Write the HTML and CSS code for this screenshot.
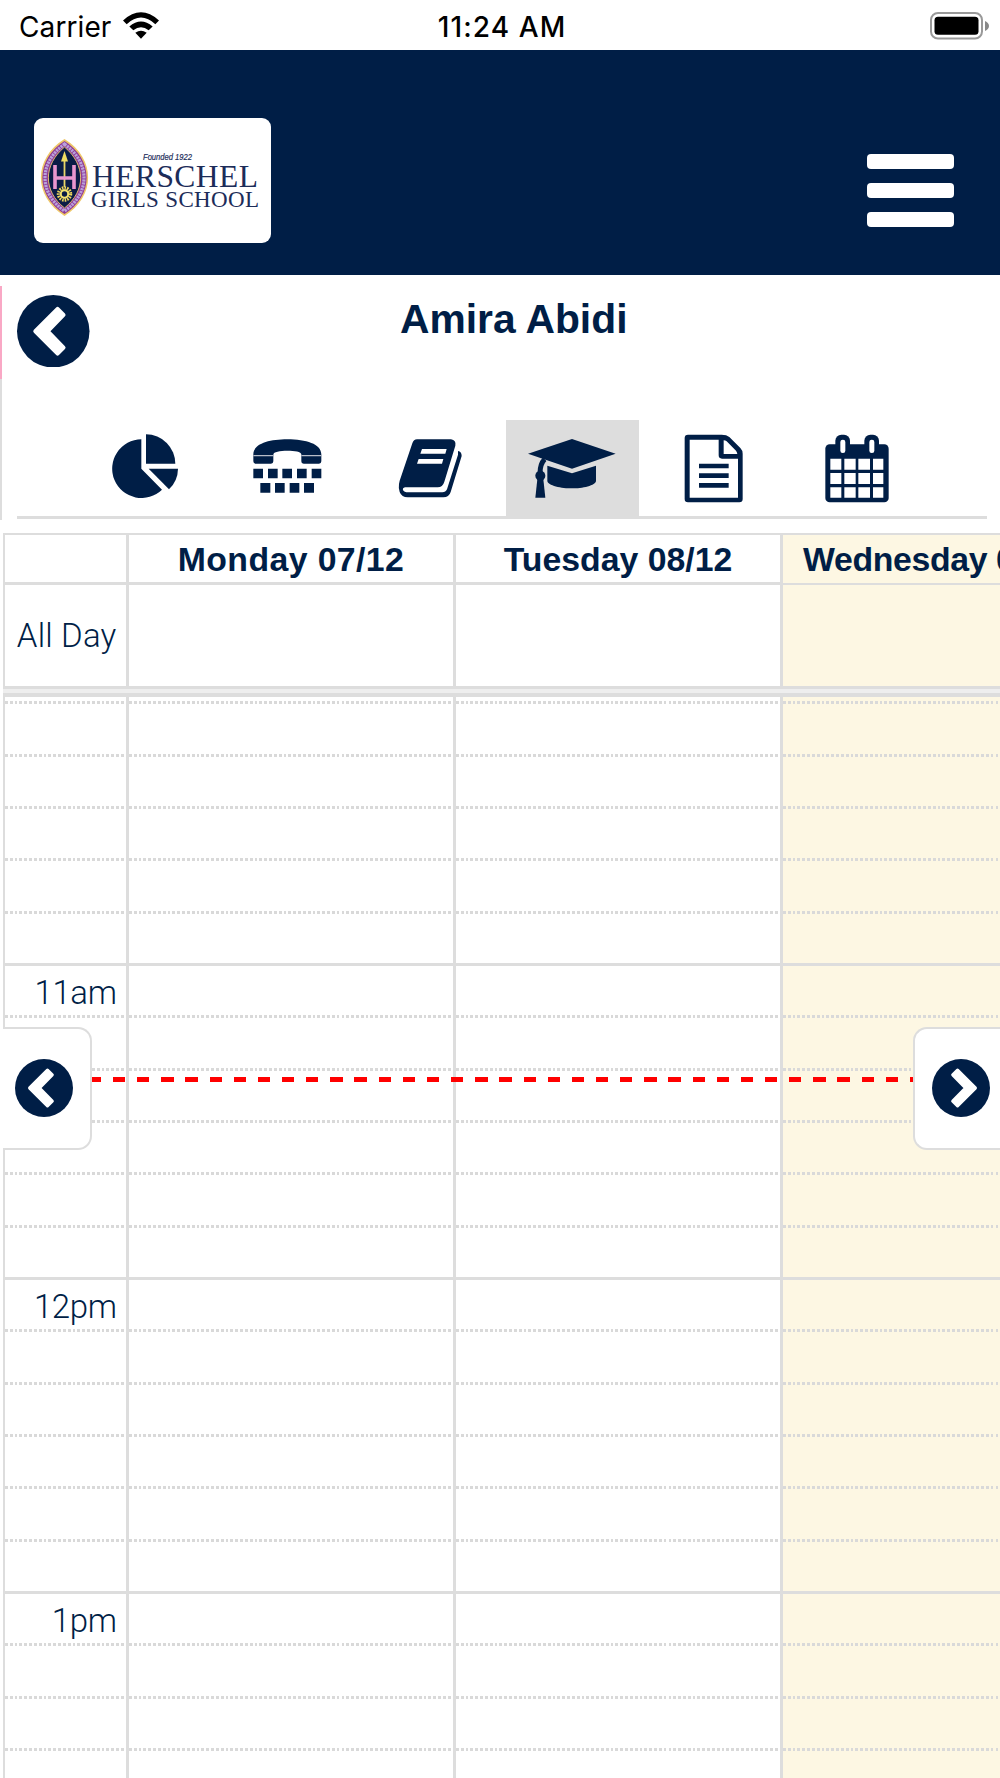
FILE: index.html
```html
<!DOCTYPE html>
<html lang="en">
<head>
    <meta charset="UTF-8">
    <meta name="viewport" content="width=device-width, initial-scale=1.0">
    <title>Herschel Girls School - Timetable</title>
    <link rel="stylesheet" href="styles.css">
</head>
<body>

<div class="status-bar">
    <div class="carrier">
        <span class="carrier-name">Carrier</span>
        <svg class="wifi" viewBox="0 0 108 80">
            <path d="M0 25 Q54 -24 108 25 L97 36 Q54 -4 11 36 Z"/>
            <path d="M19 43 Q54 13 89 43 L77 54 Q54 36 31 54 Z"/>
            <path d="M37 62 Q54 50 71 62 L54 80 Z"/>
        </svg>
    </div>
    <span class="clock">11:24 AM</span>
    <svg class="battery" viewBox="0 0 59 28">
        <rect x="1" y="1" width="51" height="25.5" rx="7" fill="#fff" stroke="#999" stroke-width="2"/>
        <rect x="4.5" y="4.7" width="44" height="18" rx="3.5"/>
        <path d="M55 9 Q59 11 59 14 T55 19 Z" fill="#888"/>
    </svg>
</div>

<header class="header">
    <div class="logo">
        <svg viewBox="0 0 237 126">
            <!-- crest -->
            <path d="M30.5 22 C61 41 61 78 30.5 97 C0 78 0 41 30.5 22 Z" fill="#8f3a94" stroke="#eec767" stroke-width="1.5"/>
            <path d="M30.5 26 C56.5 45 56.5 75 30.5 93 C4.5 75 4.5 45 30.5 26 Z" fill="none" stroke="#b9a0dc" stroke-width="3.2" stroke-dasharray="2.2 .8"/>
            <path d="M30.5 29 C52 47 52 73 30.5 90 C9 73 9 47 30.5 29 Z" fill="#0b1c46" stroke="#e0ba70" stroke-width="1"/>
            <path d="M30.5 41 V69" stroke="#e8d568" stroke-width="1.8"/>
            <path d="M30.5 33 L34 43.5 H27 Z" fill="#f1dd62"/>
            <path d="M21 47 V71 M40 47 V71 M21 60 H40" stroke="#e996cf" stroke-width="3.6" fill="none"/>
            <circle cx="30.5" cy="76" r="6" fill="none" stroke="#eed65c" stroke-width="3.5" stroke-dasharray="1.5 1"/>
            <circle cx="30.5" cy="76" r="3.7" fill="#0b1c46" stroke="#f5e36e" stroke-width="2"/>
            <!-- school name -->
            <text class="logo-founded" x="109" y="41.8" textLength="49" lengthAdjust="spacingAndGlyphs">Founded 1922</text>
            <text class="logo-name" x="58" y="68.6" textLength="166" lengthAdjust="spacing">HERSCHEL</text>
            <text class="logo-sub" x="57" y="89" textLength="168" lengthAdjust="spacing">GIRLS SCHOOL</text>
        </svg>
    </div>
    <div class="menu">
        <span></span>
        <span></span>
        <span></span>
    </div>
</header>

<div class="student">
    <div class="side-mark"></div>
    <div class="student-top">
        <svg class="back" viewBox="0 0 218 218">
            <circle cx="109" cy="109" r="109"/>
            <path class="chevron" d="M122 42 L140 60 L92 109 L140 158 L122 176 L55 109 Z"/>
        </svg>
        <h1>Amira Abidi</h1>
    </div>

    <nav class="tabs">
        <a class="tab">
            <svg viewBox="0 0 270 210">
                <path d="M124 16 V104 L186 167 A88 88 0 1 1 124 16 Z"/>
                <path d="M138 1 A88 88 0 0 1 226 89 H138 Z"/>
                <path d="M146 104 H234 A88 88 0 0 1 207 166 Z"/>
            </svg>
        </a>
        <a class="tab">
            <svg viewBox="0 0 270 210">
                <path d="M34 61 C34 30 80 16 136 16 S238 30 238 61 V82 q0 7 -7 7 H186 q-8 0 -8 -8 V61 C178 53 158 50 136 50 S94 53 94 62 V82 q0 7 -7 7 H41 q-7 0 -7 -7 Z"/>
                <path d="M34 65 H94 M178 65 H238" stroke="#b8bdc8" stroke-width="4"/>
                <path d="M34 104 h29 v29 h-29z M78 104 h29 v29 h-29z M121 104 h29 v29 h-29z M165 104 h29 v29 h-29z M209 104 h29 v29 h-29z"/>
                <path d="M55 147 h30 v29 h-30z M99 147 h29 v29 h-29z M143 147 h29 v29 h-29z M186 147 h30 v29 h-30z"/>
            </svg>
        </a>
        <a class="tab">
            <svg viewBox="0 0 270 210">
                <path d="M96 16 H198 Q214 18 211 35 L178 143 Q173 160 158 160 H60 Q52 162 54 168 Q57 175 70 175 H172 Q182 175 186 166 L219 62 V51 Q230 53 230 66 L197 174 Q192 190 175 190 H68 Q50 190 44 174 Q40 162 42 150 L44 140 L82 28 Q86 16 96 16 Z"/>
                <path d="M111 45 H185 L181 59 H106 Z M101 75 H175 L171 89 H96 Z" fill="#fff"/>
            </svg>
        </a>
        <a class="tab active">
            <svg viewBox="0 0 270 210">
                <path d="M135 15 L266 59 L135 104 L3 59 Z"/>
                <path d="M61 95 L135 118 L207 95 V140 C207 155 165 163 135 163 S61 155 61 140 Z"/>
                <path d="M39 118 C39 96 43 86 53 76" fill="none" stroke="#001e46" stroke-width="15"/>
                <circle cx="40" cy="125" r="15"/>
                <path d="M31 136 H49 L55 191 H25 Z"/>
            </svg>
        </a>
        <a class="tab">
            <svg viewBox="0 0 270 210">
                <path fill-rule="evenodd" d="M54 2 H155 Q170 2 178 9 L211 42 Q218 49 218 59 V195 q0 10 -10 10 H54 q-10 0 -10 -10 V12 q0 -10 10 -10 Z M59 17 V191 H204 V74 H156 Q146 74 146 64 V17 Z M161 19 V60 H202 Q201 54 198 50 L170 22 Q166 19 161 19 Z"/>
                <path d="M87 89 h89 v14 h-89z M87 118 h89 v14 h-89z M87 147 h89 v14 h-89z"/>
            </svg>
        </a>
        <a class="tab">
            <svg viewBox="0 0 270 210">
                <rect x="37" y="31" width="190" height="174" rx="13"/>
                <rect x="67" y="2" width="44" height="66" rx="18"/>
                <rect x="154" y="2" width="44" height="66" rx="18"/>
                <g fill="#fff">
                    <rect x="82" y="17" width="15" height="40" rx="7"/>
                    <rect x="169" y="17" width="15" height="40" rx="7"/>
                    <path d="M52 74 h33 v33 h-33z M94 74 h34 v33 h-34z M136 74 h35 v33 h-35z M180 74 h31 v33 h-31z"/>
                    <path d="M52 117 h33 v33 h-33z M94 117 h34 v33 h-34z M136 117 h35 v33 h-35z M180 117 h31 v33 h-31z"/>
                    <path d="M52 160 h33 v31 h-33z M94 160 h34 v31 h-34z M136 160 h35 v31 h-35z M180 160 h31 v31 h-31z"/>
                </g>
            </svg>
        </a>
    </nav>
</div>

<div class="calendar">
    <div class="row head">
        <div class="axis"></div>
        <div class="day monday">Monday 07/12</div>
        <div class="day">Tuesday 08/12</div>
        <div class="day today">Wednesday 09/12</div>
    </div>
    <div class="row all-day">
        <div class="axis"><span>All Day</span></div>
        <div class="day"></div>
        <div class="day"></div>
        <div class="day today"></div>
    </div>
    <div class="divider"></div>

    <div class="slots" id="slots">
        <div class="row lead">
            <div class="axis"></div>
            <div class="day"></div>
            <div class="day"></div>
            <div class="day today"></div>
        </div>
    </div>

    <div class="now-line"></div>
    <div class="nav-btn prev">
        <svg viewBox="0 0 218 218">
            <circle cx="109" cy="109" r="109"/>
            <path class="chevron" d="M122 42 L140 60 L92 109 L140 158 L122 176 L55 109 Z"/>
        </svg>
    </div>
    <div class="nav-btn next">
        <svg viewBox="0 0 218 218">
            <circle cx="109" cy="109" r="109"/>
            <path class="chevron" d="M96 42 L78 60 L126 109 L78 158 L96 176 L163 109 Z"/>
        </svg>
    </div>
</div>

<script>
    // 10 minute slots, the hour label goes on the first one of each hour
    const hours = { 5: '11am', 11: '12pm', 17: '1pm' };
    const slots = document.getElementById('slots');

    for (let i = 0; i < 21; i++) {
        const row = document.createElement('div');
        row.className = hours[i] ? 'row slot hour' : 'row slot';
        row.innerHTML = `<div class="axis"><span>${hours[i] || ''}</span></div>
            <div class="day"></div><div class="day"></div><div class="day today"></div>`;
        slots.appendChild(row);
    }
</script>

</body>
</html>
```

FILE: styles.css
```css
* {
    box-sizing: border-box;
}

body {
    margin: 0;
    height: 1778px;
    display: flex;
    flex-direction: column;
    overflow: hidden;
    background-color: #fff;
    color: #001e46;
    font-family: "Liberation Sans", Arial, sans-serif;
}

svg {
    display: block;
    fill: #001e46;
}

/* Status bar */
.status-bar {
    height: 50px;
    flex: none;
    display: grid;
    grid-template-columns: 1fr auto 1fr;
    align-items: start;
    padding: 0 11px 0 19px;
    color: #000;
    font-family: Inter, sans-serif;
    font-size: 28px;
    line-height: 54px;
}

.status-bar svg {
    fill: #000;
}

.carrier {
    display: flex;
}

.carrier-name {
    letter-spacing: 0.1px;
}

.wifi {
    width: 36px;
    height: 27px;
    margin: 12px 0 0 11.5px;
}

.clock {
    margin-right: 4px;
    font-weight: 500;
    letter-spacing: 1.1px;
}

.battery {
    width: 59px;
    height: 28px;
    margin-top: 12px;
    justify-self: end;
}

/* Header */
.header {
    height: 224.6px;
    flex: none;
    display: flex;
    justify-content: space-between;
    align-items: flex-start;
    padding: 67.5px 46px 0 34px;
    background-color: #001e46;
}

.logo {
    width: 237px;
    height: 125.5px;
    background-color: #fff;
    border-radius: 9px;
}

.logo text {
    fill: #1c2c59;
}

.logo-founded {
    font-size: 9.5px;
    font-style: italic;
    stroke: #1c2c59;
    stroke-width: 0.2;
}

.logo-name {
    font-family: "Liberation Serif", serif;
    font-size: 31.5px;
}

.logo-sub {
    font-family: "Liberation Serif", serif;
    font-size: 23px;
}

.menu {
    width: 87px;
    margin-top: 36.3px;
    display: flex;
    flex-direction: column;
    gap: 14px;
}

.menu span {
    height: 15px;
    background-color: #fff;
    border-radius: 4px;
}

/* Student */
.student {
    position: relative;
    height: 258.4px;
    flex: none;
    padding: 20.4px 13px 0 17px;
}

.side-mark {
    position: absolute;
    left: 0;
    top: 11px;
    width: 2px;
    height: 234px;
    background: linear-gradient(#f9a8c5 93px, #ddd 93px);
}

.student-top {
    height: 125px;
    display: flex;
}

.back {
    width: 72.5px;
    height: 72.5px;
}

.chevron {
    fill: #fff;
    stroke: #fff;
    stroke-width: 12;
    stroke-linejoin: round;
}

.student h1 {
    flex: 1;
    margin: 0 49px 0 0;
    text-align: center;
    font-size: 40.8px;
    line-height: 49px;
}

.tabs {
    height: 99px;
    display: flex;
    padding-left: 56.3px;
    border-bottom: 3px solid #ddd;
}

.tab {
    width: 132.6px;
    height: 96px;
    margin: 0 5px;
    padding-top: 13.7px;
}

.tab svg {
    width: 90px;
    height: 70px;
    margin: 0 auto;
}

.tab.active {
    background-color: #ddd;
}

/* Calendar */
.calendar {
    position: relative;
    flex: 1;
    min-height: 0;
    overflow: hidden;
    display: flex;
    flex-direction: column;
}

.row {
    display: grid;
    grid-template-columns: 123px 327px 327px 327px;
    margin-left: 3px;
    flex: none;
}

.axis {
    border-left: 2px solid #ddd;
    padding-right: 9.5px;
    text-align: right;
    font-family: Roboto, sans-serif;
    font-weight: 300;
    font-size: 33px;
    white-space: nowrap;
}

.day {
    border-left: 3px solid #ddd;
}

.today {
    background-color: #fdf7e3;
}

.head {
    height: 52px;
    border-top: 2px solid #ddd;
    border-bottom: 3px solid #ddd;
}

.head .day {
    font-size: 33.8px;
    font-weight: bold;
    line-height: 48px;
    text-align: center;
    white-space: nowrap;
}

.head .monday {
    letter-spacing: 0.4px;
}

.head .today {
    padding-right: 8px;
    letter-spacing: -0.35px;
}

.all-day {
    height: 101px;
    line-height: 102px;
}

.all-day .axis {
    letter-spacing: 0.2px;
}

.divider {
    height: 11px;
    flex: none;
    margin-left: 3px;
    background-color: #eee;
    border-top: 3px solid #ddd;
    border-bottom: 4px solid #ddd;
}

.slots {
    flex: 1;
    min-height: 0;
    overflow: hidden;
}

.lead {
    height: 4.33px;
}

.slot {
    height: 52.333px;
}

.slot .axis,
.slot .day {
    background-image: repeating-linear-gradient(90deg, #d9d9d9 0 2.8px, transparent 2.8px 4.83px);
    background-size: 100% 3px;
    background-repeat: no-repeat;
    line-height: 59px;
}

.slot .axis {
    letter-spacing: -0.4px;
}

.hour .axis,
.hour .day {
    background-image: linear-gradient(#ddd, #ddd);
}

.now-line {
    position: absolute;
    left: 5px;
    right: 0;
    top: 544px;
    height: 5px;
    background: repeating-linear-gradient(90deg, #f00 0 12.3px, transparent 12.3px 24.15px) -12.8px 0 / 1100px 5px;
}

/* Previous / next week buttons over the grid */
.nav-btn {
    position: absolute;
    top: 494.4px;
    height: 123px;
    padding-top: 29.5px;
    background-color: #fff;
    border: 2px solid #ddd;
}

.nav-btn svg {
    width: 58px;
    height: 58px;
}

.prev {
    left: 3px;
    width: 88.5px;
    padding-left: 11.7px;
    border-left: none;
    border-radius: 0 14px 14px 0;
}

.next {
    right: 0;
    width: 87px;
    padding-left: 17px;
    border-right: none;
    border-radius: 14px 0 0 14px;
}
```
